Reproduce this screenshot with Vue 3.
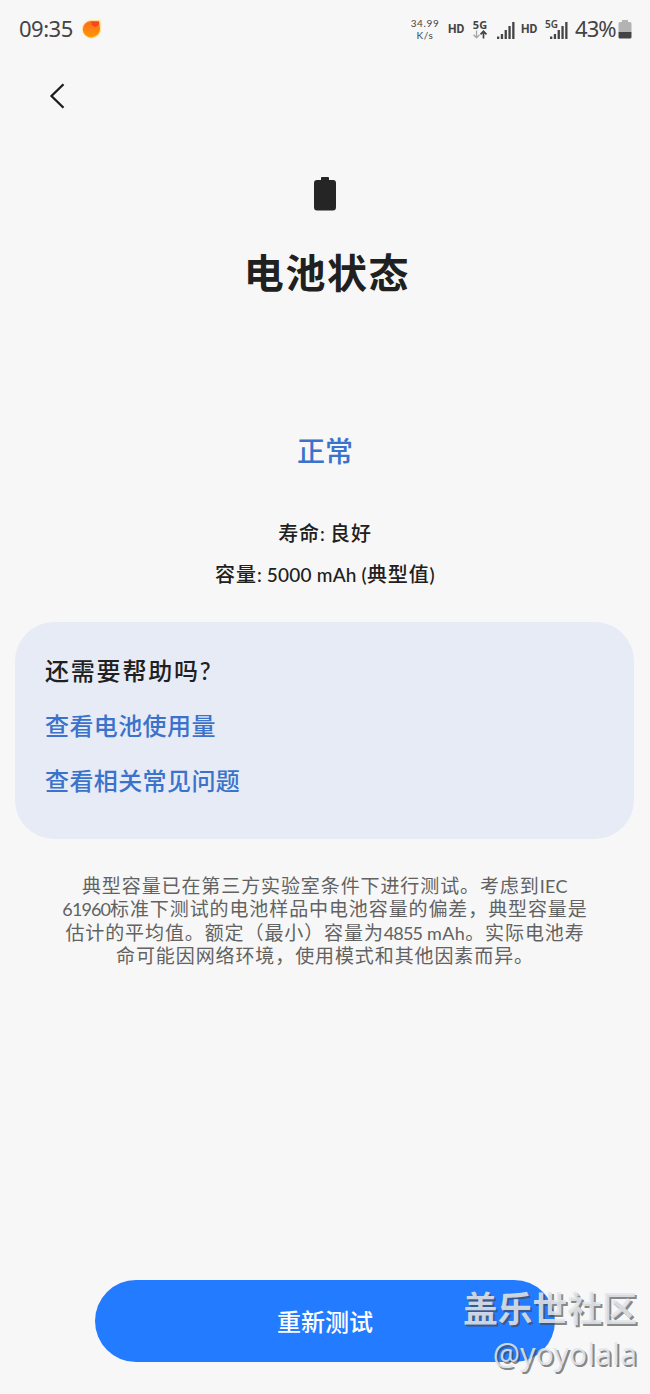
<template>
  <div class="screen">
    <header class="status-bar">
      <span class="time">09:35</span>
      <svg class="app-dot" width="20" height="20" viewBox="0 0 20 20">
        <defs>
          <linearGradient id="dot" x1="0" y1="0" x2="0" y2="1">
            <stop offset="0" stop-color="#fb6a20" />
            <stop offset="1" stop-color="#ff9800" />
          </linearGradient>
        </defs>
        <path d="M9 .8C12 .8 14 1.200 17 .6Q19.200 .6 18.800 3C18.600 6 19.200 8 19.200 10A9.600 9.300 0 1 1 9 .8Z" fill="#ffe29a" />
        <path d="M9 2C12 2 14 2.500 16.300 2.200Q17.600 2.200 17.400 4C17.200 6 18 8 18 10A8.600 8.200 0 1 1 9 2Z" fill="url(#dot)" />
        <path d="M9.500 3C12 2 14 2.800 16.300 2.500Q17.300 2.600 17 4.500C16.500 7 14.500 8.200 12.300 7.500C10 6.800 8.800 4.800 9.500 3Z" fill="#f9461f" />
      </svg>
      <div class="status-right">
        <div class="speed">
          <span>34.99</span>
          <span>K/s</span>
        </div>
        <span class="hd hd-first">HD</span>
        <div class="network">
          <span class="net-label">5G</span>
          <svg width="16" height="9" viewBox="0 0 16 9" fill="none">
            <path d="M4.500 .5V7.500M1.500 4.800L4.500 7.800L7.500 4.800" stroke="#a5a5a5" stroke-width="1.300" />
            <path d="M11.500 8.500V1.500M8.500 4.300L11.500 1.300L14.500 4.300" stroke="#444" stroke-width="1.700" />
          </svg>
        </div>
        <svg class="signal" width="18" height="17" viewBox="0 0 18 17" fill="#444">
          <rect v-for="bar in signalBars" :key="bar.x" :x="bar.x" :y="17 - bar.h" width="2.300" :height="bar.h" />
        </svg>
        <span class="hd hd-second">HD</span>
        <div class="network-overlap">
          <span class="net-small">5G</span>
          <svg width="18" height="17" viewBox="0 0 18 17" fill="#444">
            <rect v-for="bar in signalBars" :key="bar.x" :x="bar.x" :y="17 - bar.h" width="2.300" :height="bar.h" />
          </svg>
        </div>
        <span class="percent">43%</span>
        <svg class="mini-battery" width="14" height="19" viewBox="0 0 14 19">
          <path d="M4 0H10V2H12Q13.500 2 13.500 3.500V12H.5V3.500Q.5 2 2 2H4Z" fill="#b3b3b3" />
          <path d="M.5 12H13.500V17Q13.500 18.500 12 18.500H2Q.5 18.500 .5 17Z" fill="#444" />
        </svg>
      </div>
    </header>

    <nav class="nav">
      <button class="back" aria-label="返回">
        <svg width="16" height="26" viewBox="0 0 16 26" fill="none">
          <path d="M14.500 1.200L2.500 13L14.500 24.800" stroke="#1c1c1c" stroke-width="2.300" />
        </svg>
      </button>
    </nav>

    <main>
      <section class="hero">
        <svg width="22" height="34" viewBox="0 0 22 34" fill="#252525">
          <path d="M7 1Q7 0 8 0H14Q15 0 15 1V3H19Q22 3 22 6V30Q22 33.500 19 33.500H3Q0 33.500 0 30V6Q0 3 3 3H7Z" />
        </svg>
        <h1>电池状态</h1>
      </section>

      <section class="result">
        <p class="state">正常</p>
        <p class="detail">寿命<span class="latin">: </span>良好</p>
        <p class="detail">容量<span class="latin">: 5000 mAh (</span>典型值<span class="latin">)</span></p>
      </section>

      <section class="help-card">
        <h2>还需要帮助吗<span class="latin">?</span></h2>
        <a v-for="link in links" :key="link" class="help-link">{{ link }}</a>
      </section>

      <div class="note">
        <p>典型容量已在第三方实验室条件下进行测试。考虑到<span class="latin wide">IEC</span></p>
        <p><span class="latin">61960</span>标准下测试的电池样品中电池容量的偏差，典型容量是</p>
        <p>估计的平均值。额定（最小）容量为<span class="latin">4855</span><span class="latin wide"> mAh</span>。实际电池寿</p>
        <p>命可能因网络环境，使用模式和其他因素而异。</p>
      </div>
    </main>

    <footer class="footer">
      <button class="retest">重新测试</button>
    </footer>

    <div class="watermark">
      <span class="community">盖乐世社区</span>
      <span class="user">@yoyolala</span>
    </div>
  </div>
</template>

<script setup>
const links = ['查看电池使用量', '查看相关常见问题']

const signalBars = [
  { x: 0, h: 2.5 },
  { x: 3.8, h: 5 },
  { x: 7.6, h: 9 },
  { x: 11.4, h: 13 },
  { x: 15.2, h: 17 },
]
</script>

<style>
body {
  background: #f7f7f7;
}
</style>

<style scoped>
.screen {
  position: relative;
  display: flex;
  flex-direction: column;
  box-sizing: border-box;
  width: 650px;
  height: 1394px;
  overflow: hidden;
  background: #f7f7f7;
  color: #202020;
  font-family: Lato, 'Noto Sans CJK SC', sans-serif;
}

h1,
h2,
p {
  margin: 0;
  white-space: nowrap;
}

button {
  border: 0;
  padding: 0;
  font-family: inherit;
}

svg {
  display: block;
  flex-shrink: 0;
}

.status-bar {
  display: flex;
  align-items: center;
  height: 57px;
  padding: 0 18px 0 19px;
  color: #444;
  font-family: 'Noto Sans', sans-serif;
}

.time {
  width: 54px;
  margin-top: -2px;
  font-size: 22px;
  letter-spacing: -0.5px;
}

.app-dot {
  margin-left: 9px;
}

.status-right {
  display: flex;
  align-items: center;
  margin-left: auto;
}

.speed {
  display: flex;
  flex-direction: column;
  align-items: center;
  width: 30px;
  font-family: Lato, sans-serif;
  font-size: 10px;
  line-height: 12px;
  letter-spacing: 0.6px;
}

.hd {
  font-family: Roboto, sans-serif;
  font-size: 12px;
  font-weight: 700;
}

.hd-first {
  width: 17px;
  margin-left: 8px;
}

.network {
  display: flex;
  flex-direction: column;
  align-items: center;
  width: 16px;
  margin-left: 7px;
}

.net-label {
  font-size: 11px;
  font-weight: 700;
  line-height: 11px;
}

.signal {
  margin: 3px 0 0 9px;
}

.hd-second {
  width: 17px;
  margin-left: 6px;
}

.network-overlap {
  position: relative;
  margin: 3px 0 0 12px;
}

.net-small {
  position: absolute;
  top: -3px;
  left: -5px;
  font-size: 10px;
  font-weight: 600;
  line-height: 11px;
}

.percent {
  width: 40px;
  margin: -2px 0 0 7px;
  font-size: 22px;
  letter-spacing: -0.9px;
}

.mini-battery {
  margin: 2px 0 0 3px;
}

.nav {
  display: flex;
  align-items: center;
  height: 77px;
  padding-left: 49px;
}

.back {
  background: none;
}

.hero {
  display: flex;
  flex-direction: column;
  align-items: center;
  padding-top: 43px;
}

h1 {
  margin-top: 32px;
  padding-left: 4px;
  font-size: 40px;
  font-weight: 600;
  line-height: 60px;
  letter-spacing: 1.6px;
}

.result {
  display: flex;
  flex-direction: column;
  align-items: center;
  margin-top: 128px;
}

.state {
  color: #3b72cb;
  font-size: 28px;
  font-weight: 500;
  line-height: 40px;
  margin-bottom: 42px;
}

.detail {
  height: 41px;
  font-size: 20px;
  font-weight: 500;
  line-height: 41px;
  letter-spacing: 0.9px;
}

.detail .latin {
  font-size: 19px;
  letter-spacing: 0.2px;
}

.help-card {
  display: flex;
  flex-direction: column;
  box-sizing: border-box;
  width: 619px;
  height: 217px;
  margin: 27px 0 0 15px;
  padding: 29px 30px;
  border-radius: 39px;
  background: #e6ebf5;
}

h2 {
  font-size: 24px;
  font-weight: 500;
  line-height: 40px;
  letter-spacing: 1.8px;
}

.help-link {
  color: #3b72cb;
  font-size: 24px;
  font-weight: 500;
  line-height: 40px;
  letter-spacing: 0.4px;
  margin-top: 15px;
}

.note {
  margin-top: 35px;
  color: #626262;
  font-size: 19px;
  letter-spacing: 0.9px;
  text-align: center;
}

.note p {
  height: 23.3px;
  line-height: 23.3px;
}

.note .latin {
  font-size: 18px;
  line-height: 1;
  letter-spacing: -0.9px;
}

.note .wide {
  letter-spacing: 0.4px;
}

.footer {
  display: flex;
  justify-content: center;
  margin-top: auto;
  padding-bottom: 32px;
}

.retest {
  width: 460px;
  height: 82px;
  padding-bottom: 2px;
  border-radius: 41px;
  background: #237bff;
  color: #fff;
  font-size: 24px;
  font-weight: 500;
}

.watermark {
  position: absolute;
  right: 13px;
  bottom: 19px;
  display: flex;
  flex-direction: column;
  align-items: flex-end;
  color: rgba(226, 229, 235, 0.88);
  text-shadow: 2px 2px 0 rgba(70, 70, 70, 0.65);
}

.community {
  font-size: 34.8px;
  font-weight: 700;
  line-height: 46px;
}

.user {
  font-family: 'Noto Sans', sans-serif;
  font-size: 30.4px;
  line-height: 43px;
}
</style>
